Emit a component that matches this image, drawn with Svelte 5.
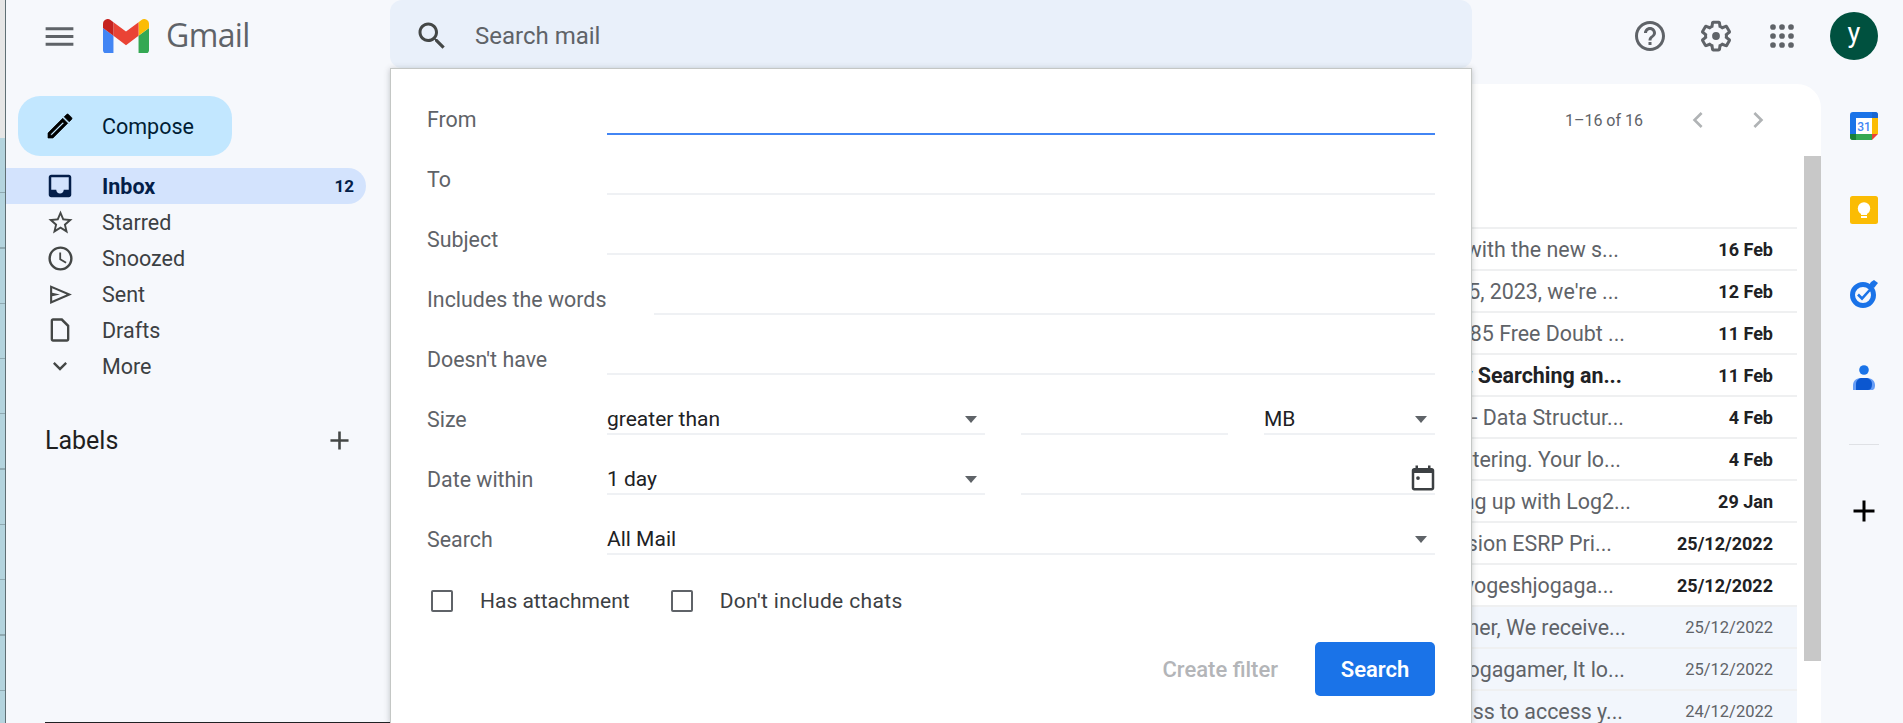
<script>
  const icons = {
    menu: 'M3 18h18v-2H3v2zm0-5h18v-2H3v2zm0-7v2h18V6H3z',
    search: 'M15.5 14h-.79l-.28-.27C15.41 12.59 16 11.11 16 9.5 16 5.91 13.09 3 9.5 3S3 5.91 3 9.5 5.91 16 9.5 16c1.61 0 3.09-.59 4.23-1.57l.27.28v.79l5 4.99L20.49 19l-4.99-5zm-6 0C7.01 14 5 11.99 5 9.5S7.01 5 9.5 5 14 7.01 14 9.5 11.99 14 9.5 14z',
    edit: 'M14.06 9.02l.92.92L5.92 19H5v-.92l9.06-9.06M17.66 3c-.25 0-.51.1-.7.29l-1.83 1.83 3.75 3.75 1.83-1.83c.39-.39.39-1.02 0-1.41l-2.34-2.34c-.2-.2-.45-.29-.71-.29zm-3.6 3.19L3 17.25V21h3.75L17.81 9.94l-3.75-3.75z',
    inbox: 'M19 3H5c-1.1 0-2 .9-2 2v14c0 1.1.9 2 2 2h14c1.1 0 2-.9 2-2V5c0-1.1-.9-2-2-2zm0 12h-4c0 1.66-1.35 3-3 3s-3-1.34-3-3H5V5h14v10z',
    star: 'M22 9.24l-7.19-.62L12 2 9.19 8.63 2 9.24l5.46 4.73L5.82 21 12 17.27 18.18 21l-1.63-7.03L22 9.24zM12 15.4l-3.76 2.27 1-4.28-3.32-2.88 4.38-.38L12 6.1l1.71 4.04 4.38.38-3.32 2.88 1 4.28L12 15.4z',
    clock: 'M11.99 2C6.47 2 2 6.48 2 12s4.47 10 9.99 10C17.52 22 22 17.52 22 12S17.52 2 11.99 2zM12 20c-4.42 0-8-3.58-8-8s3.58-8 8-8 8 3.58 8 8-3.58 8-8 8zm.5-13H11v6l5.25 3.15.75-1.23-4.5-2.67z',
    sent: 'M2 3v18l21-9L2 3zm2 3.03L17.9 12 4 17.97v-4.22L11.5 12 4 10.25V6.03z',
    draft: 'M14 2H6c-1.1 0-2 .9-2 2v16c0 1.1.9 2 2 2h12c1.1 0 2-.9 2-2V8l-6-6zm4 18H6V4h7l5 5v11z',
    down: 'M7.41 8.59L12 13.17l4.59-4.58L18 10l-6 6-6-6 1.41-1.41z',
    plus: 'M19 13h-6v6h-2v-6H5v-2h6V5h2v6h6v2z',
    help: 'M11 18h2v-2h-2v2zm1-16C6.48 2 2 6.48 2 12s4.48 10 10 10 10-4.48 10-10S17.52 2 12 2zm0 18c-4.41 0-8-3.59-8-8s3.59-8 8-8 8 3.59 8 8-3.59 8-8 8zm0-14c-2.21 0-4 1.79-4 4h2c0-1.1.9-2 2-2s2 .9 2 2c0 2-3 1.75-3 5h2c0-2.25 3-2.5 3-5 0-2.21-1.79-4-4-4z',
    gear: 'M13.85 22.25h-3.7c-.74 0-1.36-.54-1.45-1.27l-.27-1.89c-.27-.14-.53-.29-.79-.46l-1.8.72c-.7.26-1.47-.03-1.81-.65L2.2 15.53c-.35-.66-.2-1.44.36-1.88l1.53-1.19c-.01-.15-.02-.3-.02-.46 0-.15.01-.31.02-.46l-1.52-1.19c-.59-.45-.74-1.26-.37-1.88l1.85-3.19c.34-.62 1.11-.9 1.79-.63l1.81.73c.26-.17.52-.32.78-.46l.27-1.91c.09-.7.71-1.25 1.44-1.25h3.7c.74 0 1.36.54 1.45 1.27l.27 1.89c.27.14.53.29.79.46l1.8-.72c.71-.26 1.48.03 1.82.65l1.84 3.18c.36.66.2 1.44-.36 1.88l-1.52 1.19c.01.15.02.3.02.46s-.01.31-.02.46l1.52 1.19c.56.45.72 1.23.37 1.86l-1.86 3.22c-.34.62-1.11.9-1.8.63l-1.8-.72c-.26.17-.52.32-.78.46l-.27 1.91c-.1.68-.72 1.22-1.45 1.22zm-3.23-2h2.76l.37-2.55.53-.22c.44-.18.88-.44 1.34-.78l.45-.34 2.38.96 1.38-2.4-2.03-1.58.07-.56c.03-.26.06-.51.06-.78s-.03-.53-.06-.78l-.07-.56 2.03-1.58-1.39-2.4-2.39.96-.45-.35c-.42-.32-.87-.58-1.33-.77l-.52-.22-.37-2.55h-2.76l-.37 2.55-.53.21c-.44.19-.88.44-1.34.79l-.45.33-2.38-.95-1.39 2.39 2.03 1.58-.07.56a7 7 0 0 0-.06.79c0 .26.02.53.06.78l.07.56-2.03 1.58 1.38 2.4 2.39-.96.45.35c.43.33.86.58 1.33.77l.53.22.38 2.55z',
    prev: 'M15.41 7.41L14 6l-6 6 6 6 1.41-1.41L10.83 12z',
    next: 'M8.59 16.59L10 18l6-6-6-6-1.41 1.41L13.17 12z',
    date: 'M19 4h-1V2h-2v2H8V2H6v2H5c-1.11 0-1.99.9-1.99 2L3 20c0 1.1.89 2 2 2h14c1.1 0 2-.9 2-2V6c0-1.1-.9-2-2-2zm0 16H5V8h14v12zM8 13.5a1.5 1.5 0 1 0 0-3 1.5 1.5 0 0 0 0 3z'
  };

  const nav = [
    { name: 'Starred', icon: 'star', size: 29 },
    { name: 'Snoozed', icon: 'clock', size: 29 },
    { name: 'Sent', icon: 'sent', size: 25 },
    { name: 'Drafts', icon: 'draft', size: 28 },
    { name: 'More', icon: 'down', size: 28 }
  ];

  const mails = [
    { text: 'Start with the new s...', end: 1619, date: '16 Feb' },
    { text: 'Feb 5, 2023, we\'re ...', end: 1619, date: '12 Feb' },
    { text: 'GATE 85 Free Doubt ...', end: 1625, date: '11 Feb' },
    { text: 'Binary Searching an...', end: 1622, date: '11 Feb', bold: true },
    { text: 'DSA - Data Structur...', end: 1624, date: '4 Feb' },
    { text: 'registering. Your lo...', end: 1621, date: '4 Feb' },
    { text: 'signing up with Log2...', end: 1631, date: '29 Jan' },
    { text: 'Admission ESRP Pri...', end: 1612, date: '25/12/2022' },
    { text: 'Hello yogeshjogaga...', end: 1614, date: '25/12/2022' },
    { text: 'jogagamer, We receive...', end: 1626, date: '25/12/2022', read: true },
    { text: 'Hi yogeshjogagamer, It lo...', end: 1625, date: '25/12/2022', read: true },
    { text: 'access to access y...', end: 1623, date: '24/12/2022', read: true }
  ];

  // left edge of the date column, the snippets stop short of it
  const dateLeft = 1643;
</script>

<div class="page">
  <div class="edge"></div>

  <div class="gmail">
    <header class="top">
      <div class="brand">
        <svg class="menu" viewBox="0 0 24 24"><path d={icons.menu} /></svg>
        <svg class="logo" viewBox="52 42 88 66">
          <path fill="#4285f4" d="M58 108h14V74L52 59v43c0 3.32 2.69 6 6 6" />
          <path fill="#34a853" d="M120 108h14c3.32 0 6-2.69 6-6V59l-20 15" />
          <path fill="#fbbc04" d="M120 48v26l20-15v-8c0-7.42-8.47-11.65-14.4-7.2" />
          <path fill="#ea4335" d="M72 74V48l24 18 24-18v26L96 92" />
          <path fill="#c5221f" d="M52 51v8l20 15V48l-5.6-4.2c-5.94-4.45-14.4-.22-14.4 7.2" />
        </svg>
        <span class="wordmark">Gmail</span>
      </div>

      <div class="searchbar">
        <svg class="search-icon" viewBox="0 0 24 24"><path d={icons.search} /></svg>
        <span>Search mail</span>
      </div>

      <div class="tools">
        <svg viewBox="0 0 24 24"><path d={icons.help} /></svg>
        <svg viewBox="0 0 24 24"><path d={icons.gear} /><circle cx="12" cy="12" r="2.6" /></svg>
        <svg viewBox="0 0 24 24">
          {#each [6, 12, 18] as y}
            {#each [6, 12, 18] as x}
              <circle cx={x} cy={y} r="1.9" />
            {/each}
          {/each}
        </svg>
        <div class="avatar">y</div>
      </div>
    </header>

    <div class="body">
      <aside class="sidebar">
        <button class="compose">
          <svg viewBox="0 0 24 24"><path d={icons.edit} /></svg>
          Compose
        </button>

        <div class="nav-row active">
          <span class="nav-icon"><svg width="30" height="30" viewBox="0 0 24 24"><path d={icons.inbox} /></svg></span>
          <span>Inbox</span>
          <span class="count">12</span>
        </div>
        {#each nav as item}
          <div class="nav-row">
            <span class="nav-icon">
              <svg width={item.size} height={item.size} viewBox="0 0 24 24"><path d={icons[item.icon]} /></svg>
            </span>
            <span>{item.name}</span>
          </div>
        {/each}

        <div class="labels">
          <span>Labels</span>
          <svg viewBox="0 0 24 24"><path d={icons.plus} /></svg>
        </div>
      </aside>

      <main class="panel">
        <div class="list">
          <div class="pager">
            <span class="range">1–16 of 16</span>
            <span class="chev"><svg viewBox="0 0 24 24"><path d={icons.prev} /></svg></span>
            <span class="chev"><svg viewBox="0 0 24 24"><path d={icons.next} /></svg></span>
          </div>
          <div class="spacer"></div>
          {#each mails as mail}
            <div class="mail" class:read={mail.read} class:bold={mail.bold}>
              <span class="snippet" style="margin-right: {dateLeft - mail.end}px">{mail.text}</span>
              <span class="when">{mail.date}</span>
            </div>
          {/each}
        </div>
        <div class="scrollbar"></div>
      </main>

      <aside class="rail">
        <div class="rail-slot">
          <svg class="addon" viewBox="0 0 28 28">
            <path fill="#1a73e8" d="M3 0h22a3 3 0 0 1 3 3v4H6v15H0V3a3 3 0 0 1 3-3z" />
            <path fill="#fff" d="M6 6h16v16H6z" />
            <path fill="#fbbc04" d="M22 6h6v16h-6z" />
            <path fill="#34a853" d="M0 22h22v6H3a3 3 0 0 1-3-3z" />
            <path fill="#188038" d="M0 22h6v6H3a3 3 0 0 1-3-3z" />
            <path fill="#ea4335" d="M22 22h6l-6 6z" />
            <path fill="#1967d2" d="M22 0h3a3 3 0 0 1 3 3v3h-6z" />
            <text x="14" y="19" text-anchor="middle" class="cal-text">31</text>
          </svg>
        </div>
        <div class="rail-slot">
          <svg class="addon" viewBox="0 0 28 28">
            <rect width="28" height="28" rx="2.5" fill="#fbbc04" />
            <circle cx="14" cy="12.5" r="6.2" fill="#fff" />
            <rect x="11" y="16" width="6" height="3" fill="#fff" />
            <rect x="11" y="20" width="6" height="2" fill="#fff" />
          </svg>
        </div>
        <div class="rail-slot">
          <svg class="addon" viewBox="0 0 28 28">
            <circle cx="13" cy="15" r="10.5" fill="none" stroke="#1a73e8" stroke-width="5" />
            <path fill="#1a73e8" d="M21 2l3-2 4 3-4 5-5-3z" />
            <path fill="none" stroke="#1a73e8" stroke-width="2.6" d="M8 14.5l4 4 10-11" />
          </svg>
        </div>
        <div class="rail-slot">
          <svg class="addon" viewBox="0 0 28 28">
            <circle cx="14" cy="6" r="4.8" fill="#1a73e8" />
            <path fill="#669df6" d="M3 26v-5c0-4.5 4-7 8-7h6c4 0 8 2.5 8 7 0 2.5-.5 5-3 5z" />
            <path fill="#0b57d0" d="M6 26v-6c0-3.5 3-6 6-6h4c3 0 6 2.5 6 6 0 3-1 6-4 6z" />
          </svg>
        </div>
        <div class="rail-line"></div>
        <svg class="rail-plus" viewBox="0 0 24 24"><path d={icons.plus} /></svg>
      </aside>
    </div>

    <div class="dialog">
      <div class="row"><span class="label">From</span><div class="field focus"></div></div>
      <div class="row"><span class="label">To</span><div class="field"></div></div>
      <div class="row"><span class="label">Subject</span><div class="field"></div></div>
      <div class="row includes"><span class="label">Includes the words</span><div class="field"></div></div>
      <div class="row"><span class="label">Doesn't have</span><div class="field"></div></div>
      <div class="row">
        <span class="label">Size</span>
        <div class="field select half">greater than<i class="caret"></i></div>
        <div class="field num"></div>
        <div class="field select unit">MB<i class="caret"></i></div>
      </div>
      <div class="row">
        <span class="label">Date within</span>
        <div class="field select half">1 day<i class="caret"></i></div>
        <div class="field date">
          <svg viewBox="0 0 24 24"><path fill-rule="evenodd" d={icons.date} /></svg>
        </div>
      </div>
      <div class="row">
        <span class="label">Search</span>
        <div class="field select">All Mail<i class="caret"></i></div>
      </div>

      <div class="checks">
        <span class="box"></span><span class="check-text">Has attachment</span>
        <span class="box"></span><span class="check-text wide">Don't include chats</span>
      </div>

      <div class="actions">
        <span class="create">Create filter</span>
        <button class="go">Search</button>
      </div>
    </div>

    <div class="taskbar"></div>
  </div>
</div>

<style>
  :global(body) {
    margin: 0;
    background: #f6f8fc;
  }

  .page {
    display: flex;
    height: 723px;
    overflow: hidden;
    font-family: Roboto, "Liberation Sans", sans-serif;
    color: #202124;
  }

  .edge {
    width: 5px;
    flex: none;
    border-right: 1px solid #5f6f74;
    background: repeating-linear-gradient(to bottom, #b4d4de 0 54px, #8fa9b1 54px 55.3px) 0 138px no-repeat, #e6e6e6;
  }

  .gmail {
    flex: 1;
    position: relative;
    display: flex;
    flex-direction: column;
    min-width: 0;
  }

  .top {
    display: flex;
    height: 84px;
    flex: none;
  }

  .brand {
    width: 384px;
    flex: none;
    height: 72px;
    display: flex;
    align-items: center;
  }

  .menu {
    width: 37px;
    height: 37px;
    margin-left: 35px;
    fill: #5f6368;
  }

  .logo {
    width: 46px;
    height: 34.5px;
    margin-left: 25px;
  }

  .wordmark {
    margin: -3px 0 0 17px;
    font-family: "Open Sans", sans-serif;
    font-size: 32px;
    letter-spacing: -0.6px;
    color: #5f6368;
  }

  .searchbar {
    width: 1082px;
    height: 68px;
    flex: none;
    display: flex;
    align-items: center;
    box-sizing: border-box;
    padding-top: 4px;
    border-radius: 12px;
    background: #e9f0fa;
    font-size: 24px;
    color: #5f6368;
  }

  .search-icon {
    width: 36px;
    height: 36px;
    margin-left: 24px;
    margin-right: 25px;
    fill: #444746;
  }

  .tools {
    display: flex;
    align-items: center;
    height: 72px;
    margin-left: 145px;
  }

  .tools svg {
    width: 36px;
    height: 36px;
    padding: 0 15px;
    fill: #5f6368;
  }

  .avatar {
    width: 48px;
    height: 48px;
    margin-left: 15px;
    border-radius: 50%;
    background: #00513f;
    color: #fff;
    font-size: 27px;
    line-height: 42px;
    text-align: center;
  }

  .body {
    flex: 1;
    display: flex;
    min-height: 0;
  }

  .sidebar {
    width: 384px;
    flex: none;
    padding-top: 12px;
    box-sizing: border-box;
  }

  .compose {
    display: flex;
    align-items: center;
    width: 214px;
    height: 60px;
    margin: 0 0 12px 12px;
    padding: 0 0 0 26px;
    border: 0;
    border-radius: 22px;
    background: #c2e7ff;
    font-family: inherit;
    font-size: 21.5px;
    color: #001d35;
  }

  .compose svg {
    width: 32px;
    height: 32px;
    margin-right: 26px;
    fill: #000;
    stroke: #000;
    stroke-width: 0.5;
  }

  .nav-row {
    display: flex;
    align-items: center;
    width: 360px;
    height: 36px;
    box-sizing: border-box;
    padding-right: 12px;
    border-radius: 0 18px 18px 0;
    font-size: 21.5px;
    color: #3c4043;
  }

  .nav-icon {
    width: 108px;
    margin-right: -12px;
    flex: none;
    display: flex;
    justify-content: center;
    align-items: center;
    fill: #444746;
  }

  .nav-row.active {
    background: #d3e3fd;
    font-weight: 700;
    color: #041e49;
  }

  .active .nav-icon {
    fill: #041e49;
  }

  .count {
    margin-left: auto;
    font-size: 17px;
  }

  .labels {
    display: flex;
    align-items: center;
    justify-content: space-between;
    width: 310px;
    height: 36px;
    margin: 38px 0 0 39px;
    font-size: 25px;
    color: #1f1f1f;
  }

  .labels svg {
    width: 31px;
    height: 31px;
    fill: #444746;
  }

  .panel {
    flex: none;
    width: 1431px;
    display: flex;
    background: #fff;
    border-radius: 16px 24px 0 0;
    overflow: hidden;
  }

  .list {
    width: 1407px;
    flex: none;
  }

  .pager {
    display: flex;
    align-items: center;
    justify-content: flex-end;
    height: 72px;
    padding-right: 9px;
    font-size: 16px;
    color: #5f6368;
  }

  .range {
    margin-right: 25px;
  }

  .chev {
    width: 60px;
    display: flex;
    justify-content: center;
    fill: #b0b3b5;
  }

  .chev svg {
    width: 32px;
    height: 32px;
  }

  .spacer {
    height: 71px;
  }

  .mail {
    display: flex;
    align-items: center;
    height: 42px;
    box-sizing: border-box;
    padding-right: 24px;
    border-top: 2px solid #eff0f1;
    font-size: 21.4px;
    color: #5f6368;
  }

  .mail.read {
    background: #f2f6fc;
  }

  .mail.bold .snippet {
    font-weight: 700;
    color: #202124;
  }

  .snippet {
    margin-left: auto;
    white-space: nowrap;
  }

  .when {
    width: 130px;
    flex: none;
    text-align: right;
    font-size: 18px;
    font-weight: 700;
    color: #202124;
  }

  .read .when {
    font-size: 16.5px;
    font-weight: 400;
    color: #5f6368;
  }

  .scrollbar {
    width: 17px;
    height: 505px;
    margin: 72px 0 0 7px;
    flex: none;
    background: #c8c8c8;
  }

  .rail {
    width: 82px;
    flex: none;
    box-sizing: border-box;
    padding-left: 4px;
    display: flex;
    flex-direction: column;
    align-items: center;
  }

  .rail-slot {
    height: 84px;
    flex: none;
    display: flex;
    align-items: center;
  }

  .addon {
    width: 28px;
    height: 28px;
  }

  .cal-text {
    font-family: Roboto, sans-serif;
    font-size: 12px;
    font-weight: 500;
    fill: #4285f4;
  }

  .rail-line {
    width: 30px;
    height: 1px;
    margin-top: 24px;
    background: #dfe1e5;
  }

  .rail-plus {
    width: 36px;
    height: 36px;
    margin-top: 48px;
    fill: #000;
  }

  .dialog {
    position: absolute;
    left: 384px;
    top: 68px;
    bottom: 0;
    width: 1082px;
    box-sizing: border-box;
    padding: 6px 36px 0 36px;
    background: #fff;
    border: 1px solid #c4c7c5;
    border-bottom: 0;
    box-shadow: 0 1px 6px rgba(60, 64, 67, 0.3);
  }

  .row {
    display: flex;
    align-items: flex-end;
    height: 60px;
    font-size: 21.4px;
  }

  .label {
    width: 180px;
    flex: none;
    line-height: 30px;
    white-space: nowrap;
    color: #5f6368;
  }

  .field {
    flex: 1;
    height: 31px;
    line-height: 30px;
    font-size: 21px;
    box-sizing: border-box;
    position: relative;
    border-bottom: 2px solid #eff1f4;
    color: #202124;
  }

  .field.focus {
    border-bottom-color: #4285f4;
  }

  .includes .field {
    margin-left: 47px;
  }

  .half {
    flex: none;
    width: 378px;
  }

  .num {
    flex: none;
    width: 207px;
    margin: 0 36px;
  }

  .unit {
    flex: 1;
  }

  .date {
    margin-left: 36px;
    display: flex;
    justify-content: flex-end;
  }

  .date svg {
    width: 30px;
    height: 30px;
    margin: -1px -3px 0 0;
    fill: #3c4043;
  }

  .caret {
    position: absolute;
    right: 8px;
    top: 12px;
    width: 0;
    height: 0;
    border-left: 6.5px solid transparent;
    border-right: 6.5px solid transparent;
    border-top: 7px solid #5f6368;
  }

  .checks {
    display: flex;
    align-items: center;
    height: 45px;
    margin: 23px 0 0 4px;
    font-size: 21px;
    color: #3c4043;
  }

  .box {
    width: 22px;
    height: 22px;
    flex: none;
    box-sizing: border-box;
    border: 2px solid #5f6368;
    border-radius: 2px;
  }

  .check-text {
    margin: 0 41px 0 27px;
  }

  .wide {
    letter-spacing: 0.35px;
  }

  .actions {
    display: flex;
    align-items: center;
    justify-content: flex-end;
    gap: 37px;
    margin-top: 19px;
  }

  .create {
    font-size: 22px;
    font-weight: 500;
    color: #b3b5b8;
  }

  .go {
    width: 120px;
    height: 54px;
    border: 0;
    border-radius: 5px;
    background: #1a73e8;
    color: #fff;
    font-family: inherit;
    font-size: 22px;
    font-weight: 600;
  }

  .taskbar {
    position: absolute;
    left: 39px;
    width: 345px;
    bottom: 0;
    height: 1px;
    background: #202124;
  }
</style>
